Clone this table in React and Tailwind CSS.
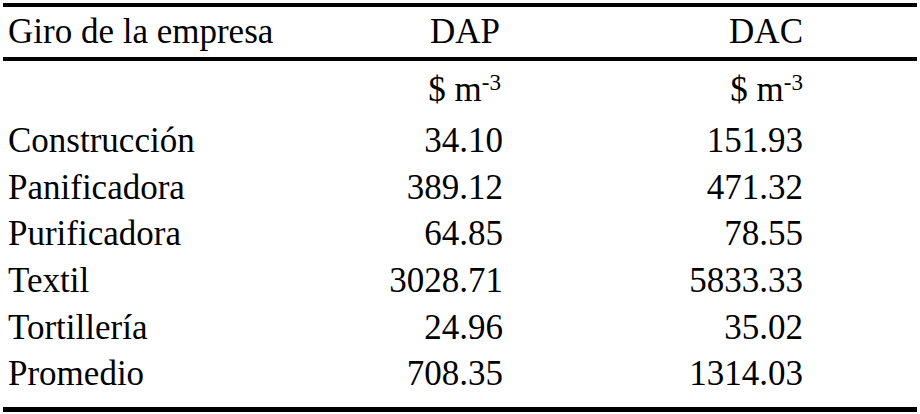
import React from "react";

const rows = [
  ["Construcción", "34.10", "151.93"],
  ["Panificadora", "389.12", "471.32"],
  ["Purificadora", "64.85", "78.55"],
  ["Textil", "3028.71", "5833.33"],
  ["Tortillería", "24.96", "35.02"],
  ["Promedio", "708.35", "1314.03"],
];

function Unit() {
  return (
    <span>
      $ m
      <sup className="relative -top-[11px] align-baseline text-[23px] leading-none">-3</sup>
    </span>
  );
}

export default function App() {
  return (
    <div className="w-[920px] h-[414px] bg-white text-black px-[3px] pt-[3px] overflow-hidden font-['Liberation_Serif','Times_New_Roman',serif]">
      <div className="border-t-4 border-black">
        <div className="grid grid-cols-[380px_120px_300px_1fr] h-[54px] leading-[50px] text-[35px] border-b-4 border-black">
          <div className="pl-[5px]">Giro de la empresa</div>
          <div className="text-right pr-[3px]">DAP</div>
          <div className="text-right">DAC</div>
          <div />
        </div>
        <div className="grid grid-cols-[380px_120px_300px_1fr] h-[57px] leading-[58px] text-[35px]">
          <div />
          <div className="text-right pr-[2px]">
            <Unit />
          </div>
          <div className="text-right">
            <Unit />
          </div>
          <div />
        </div>
        <div className="pb-[9px] border-b-[5px] border-black">
          {rows.map(([name, dap, dac]) => (
            <div
              key={name}
              className="grid grid-cols-[380px_120px_300px_1fr] h-[46.7px] leading-[46.7px] text-[35px]"
            >
              <div className="pl-[5px]">{name}</div>
              <div className="text-right">{dap}</div>
              <div className="text-right">{dac}</div>
              <div />
            </div>
          ))}
        </div>
      </div>
    </div>
  );
}
